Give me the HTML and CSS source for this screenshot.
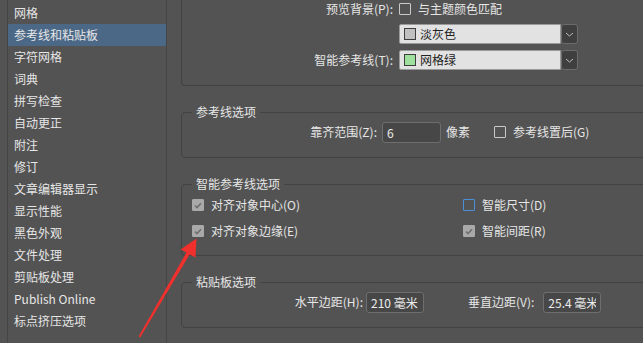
FILE: index.html
```html
<!DOCTYPE html>
<html lang="zh-CN">
<head>
  <meta charset="UTF-8">
  <title>首选项 - 参考线和粘贴板</title>
  <link rel="stylesheet" href="styles.css">
</head>
<body>
  <div class="prefs">
    <ul class="sidebar">
      <li>网格</li>
      <li class="active">参考线和粘贴板</li>
      <li>字符网格</li>
      <li>词典</li>
      <li>拼写检查</li>
      <li>自动更正</li>
      <li>附注</li>
      <li>修订</li>
      <li>文章编辑器显示</li>
      <li>显示性能</li>
      <li>黑色外观</li>
      <li>文件处理</li>
      <li>剪贴板处理</li>
      <li>Publish Online</li>
      <li>标点挤压选项</li>
    </ul>

    <div class="main">
      <!-- colour block, top cut off -->
      <div class="group group-top">
        <div class="form-grid">
          <span class="label">预览背景(P):</span>
          <label class="check"><span class="box"></span>与主题颜色匹配</label>

          <span class="label"></span>
          <div class="select">
            <div class="select-field"><span class="swatch swatch-gray"></span>淡灰色</div>
            <div class="select-btn">
              <svg width="9" height="5" viewBox="0 0 9 5"><polyline points="1,1 4.5,4 8,1" fill="none" stroke="#bdbdbd" stroke-width="1"/></svg>
            </div>
          </div>

          <span class="label">智能参考线(T):</span>
          <div class="select">
            <div class="select-field"><span class="swatch swatch-green"></span>网格绿</div>
            <div class="select-btn">
              <svg width="9" height="5" viewBox="0 0 9 5"><polyline points="1,1 4.5,4 8,1" fill="none" stroke="#bdbdbd" stroke-width="1"/></svg>
            </div>
          </div>
        </div>
      </div>

      <div class="group group-row">
        <span class="group-title">参考线选项</span>
        <div class="row">
          <span class="label snap-label">靠齐范围(Z):</span>
          <input class="field snap-field" type="text" value="6">
          <span class="unit">像素</span>
          <label class="check guides-back"><span class="box"></span>参考线置后(G)</label>
        </div>
      </div>

      <div class="group">
        <span class="group-title">智能参考线选项</span>
        <div class="check-grid">
          <label class="check"><span class="box checked"><svg width="8" height="7" viewBox="0 0 8 7"><polyline points="1,3.5 3,5.5 7,1.2" fill="none" stroke="#6f6f6f" stroke-width="1.6"/></svg></span>对齐对象中心(O)</label>
          <label class="check"><span class="box box-focus"></span>智能尺寸(D)</label>
          <label class="check"><span class="box checked"><svg width="8" height="7" viewBox="0 0 8 7"><polyline points="1,3.5 3,5.5 7,1.2" fill="none" stroke="#6f6f6f" stroke-width="1.6"/></svg></span>对齐对象边缘(E)</label>
          <label class="check"><span class="box checked"><svg width="8" height="7" viewBox="0 0 8 7"><polyline points="1,3.5 3,5.5 7,1.2" fill="none" stroke="#6f6f6f" stroke-width="1.6"/></svg></span>智能间距(R)</label>
        </div>
      </div>

      <div class="group group-row">
        <span class="group-title">粘贴板选项</span>
        <div class="row">
          <span class="label paste-label">水平边距(H):</span>
          <input class="field paste-field" type="text" value="210 毫米">
          <span class="label vert-label">垂直边距(V):</span>
          <input class="field paste-field" type="text" value="25.4 毫米">
        </div>
      </div>
    </div>
  </div>

  <!-- annotation arrow -->
  <svg class="arrow" width="643" height="343" viewBox="0 0 643 343">
    <polygon points="138.6,336.6 186.4,252.6 180.5,249.5 196.5,238.5 195.5,257.5 189.6,254.4 140.2,337.6" fill="#f0302c"/>
  </svg>
</body>
</html>
```

FILE: styles.css
```css
:root {
  --panel-bg: #535353;
  --line: #454545;
  --group-line: #424242;
  --text: #e6e6e6;
  --select-blue: #4b6887;
}

html, body {
  margin: 0;
  padding: 0;
  overflow: hidden;
}

body {
  width: 643px;
  height: 343px;
  background-color: var(--panel-bg);
  color: var(--text);
  font-family: "Noto Sans CJK SC", "Noto Sans", sans-serif;
  font-size: 12px;
  line-height: 18px;
  position: relative;
}

.prefs {
  display: flex;
  height: 343px;
}

.sidebar {
  list-style: none;
  margin: 0 0 0 7px;
  padding: 2px 0 0;
  width: 158px;
  flex-shrink: 0;
  border-left: 1px solid var(--line);
  border-right: 1px solid var(--line);
}

.sidebar li {
  height: 22px;
  line-height: 22px;
  padding-left: 6px;
  white-space: nowrap;
}

.sidebar li.active {
  background-color: var(--select-blue);
}

.main {
  padding-left: 14px;
  display: flex;
  flex-direction: column;
  gap: 26px;
  flex-shrink: 0;
}

.group {
  position: relative;
  width: 480px;
  border: 1px solid var(--group-line);
  border-radius: 4px;
  padding: 9px 0 15px;
}

.group-top {
  border-top: none;
  border-radius: 0 0 4px 4px;
  padding: 0 0 15px;
}

.group-title {
  position: absolute;
  top: -10px;
  left: 10px;
  padding: 0 4px;
  background-color: var(--panel-bg);
  line-height: 18px;
}

.form-grid {
  display: grid;
  grid-template-columns: 211px auto;
  grid-template-rows: 18px 20px 20px;
  column-gap: 6px;
  row-gap: 6px;
  align-items: center;
}

.label {
  text-align: right;
  white-space: nowrap;
}

.check {
  display: flex;
  align-items: center;
  gap: 7px;
  white-space: nowrap;
}

.box {
  width: 10px;
  height: 10px;
  border: 1px solid #c9c9c9;
  border-radius: 1px;
  display: flex;
  align-items: center;
  justify-content: center;
  flex-shrink: 0;
}

.box.checked {
  background-color: #a9a9a9;
  border-color: #a9a9a9;
}

.box.box-focus {
  border-color: #4a8fd8;
}

.select {
  display: flex;
  height: 20px;
}

.select-field {
  width: 154px;
  height: 18px;
  background-color: #e2e2e2;
  border: 1px solid #9a9a9a;
  border-radius: 2px 0 0 2px;
  color: #222;
  display: flex;
  align-items: center;
  gap: 4px;
  padding-left: 4px;
  padding-right: 2px;
}

.swatch {
  width: 10px;
  height: 10px;
  border: 1px solid #3e3e3e;
}

.swatch-gray {
  background-color: #c0c0c0;
}

.swatch-green {
  background-color: #9fe09f;
}

.select-btn {
  width: 15px;
  height: 18px;
  background-color: #3f3f3f;
  border: 1px solid #6c6c6c;
  border-radius: 3px;
  display: flex;
  align-items: center;
  justify-content: center;
}

.row {
  display: flex;
  align-items: center;
  height: 20px;
}

.field {
  box-sizing: border-box;
  height: 21px;
  background-color: #474747;
  border: 1px solid #6e6e6e;
  border-radius: 3px;
  color: #ececec;
  font-family: "Noto Sans CJK SC", "Noto Sans", sans-serif;
  font-size: 12px;
  padding: 0 4px;
  outline: none;
}

.snap-label {
  width: 195px;
}

.snap-field {
  width: 59px;
  margin-left: 5px;
}

.unit {
  margin-left: 5px;
}

.guides-back {
  margin-left: 24px;
}

.check-grid {
  display: grid;
  grid-template-columns: 271px auto;
  grid-auto-rows: 18px;
  row-gap: 8px;
  padding: 2px 0 0 10px;
}

.paste-label {
  width: 181px;
}

.paste-field {
  width: 58px;
  margin-left: 3px;
}

.vert-label {
  margin-left: 44px;
  margin-right: 6px;
}

.arrow {
  position: absolute;
  left: 0;
  top: 0;
  pointer-events: none;
}
```
